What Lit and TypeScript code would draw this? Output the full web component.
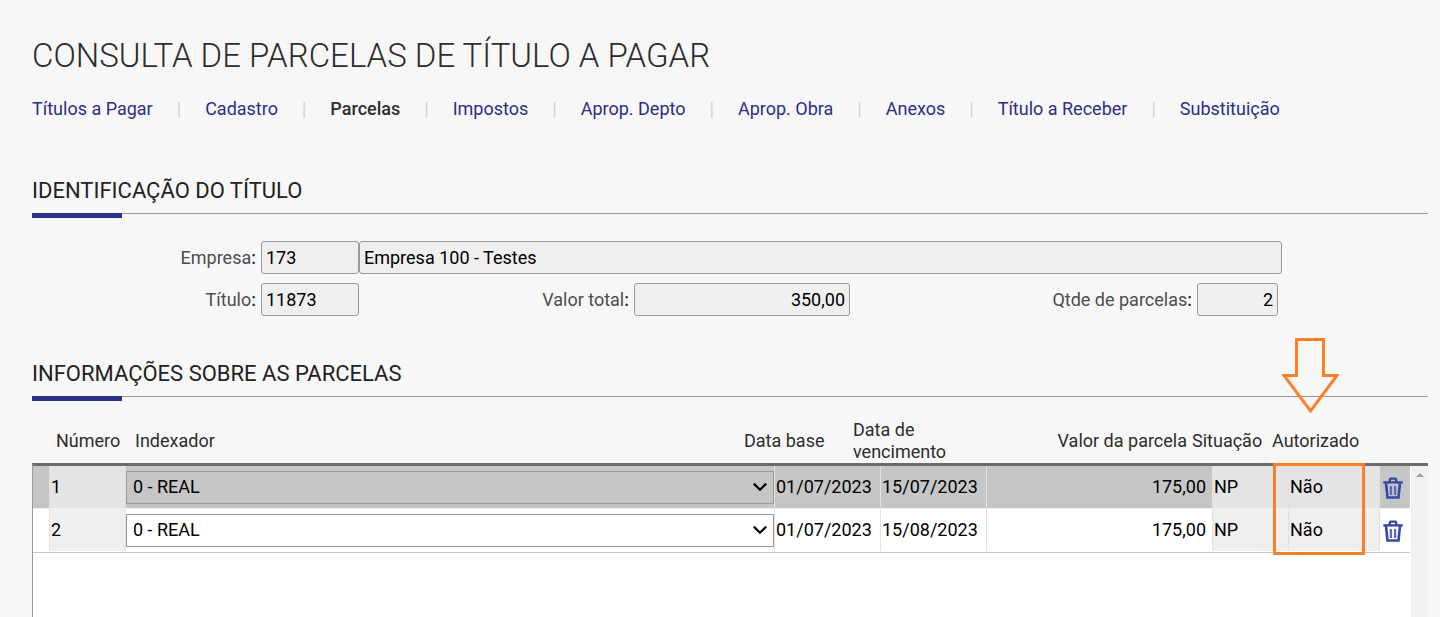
import { LitElement, html, css } from "lit";
import { customElement, property } from "lit/decorators.js";

interface Parcela {
  numero: number;
  indexador: string;
  dataBase: string;
  vencimento: string;
  valor: string;
  situacao: string;
  autorizado: string;
}

const ABAS = [
  "Títulos a Pagar",
  "Cadastro",
  "Parcelas",
  "Impostos",
  "Aprop. Depto",
  "Aprop. Obra",
  "Anexos",
  "Título a Receber",
  "Substituição",
];

const PARCELAS: Parcela[] = [
  { numero: 1, indexador: "0 - REAL", dataBase: "01/07/2023", vencimento: "15/07/2023", valor: "175,00", situacao: "NP", autorizado: "Não" },
  { numero: 2, indexador: "0 - REAL", dataBase: "01/07/2023", vencimento: "15/08/2023", valor: "175,00", situacao: "NP", autorizado: "Não" },
];

@customElement("nav-abas")
class NavAbas extends LitElement {
  @property() ativa = "";

  static styles = css`
    :host { display: block; }
    ul { display: flex; flex-wrap: wrap; margin: 0; padding: 0; list-style: none; }
    li { display: flex; align-items: center; line-height: 24px; }
    li + li::before { content: "|"; margin: 0 24px; color: #d0d0d0; }
    a { color: #2b2f85; text-decoration: none; }
    a.ativa { color: #2d2d2d; font-weight: 500; }
  `;

  render() {
    return html`<nav>
      <ul>
        ${ABAS.map((a) => html`<li><a href="#" class=${a === this.ativa ? "ativa" : ""}>${a}</a></li>`)}
      </ul>
    </nav>`;
  }
}

@customElement("titulo-form")
class TituloForm extends LitElement {
  static styles = css`
    :host { display: block; }
    form { display: grid; gap: 9px; margin-right: 146px; }
    .linha { display: grid; align-items: center; }
    .empresa { grid-template-columns: 229px 98px minmax(0, 1fr); }
    .valores {
      grid-template-columns: 229px 98px minmax(0, 275fr) 216px minmax(0, 347fr) 81px;
      padding-right: 4px;
    }
    label { padding-right: 5px; line-height: 24px; text-align: right; color: #4d4d4d; white-space: nowrap; }
    label span { color: #2d2d2d; font-weight: 500; }
    input {
      box-sizing: border-box;
      width: 100%;
      height: 33px;
      margin: 0;
      padding: 0 4px;
      border: 1px solid #999;
      border-radius: 3px;
      background: #efefef;
      color: #000;
      font: inherit;
      outline: none;
    }
    .num { text-align: right; }
  `;

  render() {
    return html`<form>
      <div class="linha empresa">
        <label for="empresa">Empresa<span>:</span></label>
        <input id="empresa" readonly value="173" />
        <input aria-label="Nome da empresa" readonly value="Empresa 100 - Testes" />
      </div>
      <div class="linha valores">
        <label for="titulo">Título<span>:</span></label>
        <input id="titulo" readonly value="11873" />
        <label for="total">Valor total<span>:</span></label>
        <input id="total" class="num" readonly value="350,00" />
        <label for="qtde">Qtde de parcelas<span>:</span></label>
        <input id="qtde" class="num" readonly value="2" />
      </div>
    </form>`;
  }
}

@customElement("parcelas-grid")
class ParcelasGrid extends LitElement {
  static styles = css`
    :host { display: flex; flex-direction: column; position: relative; }
    table, thead, tbody { display: block; }
    tr { display: grid; }
    th, td { padding: 0; font-weight: 400; text-align: left; }
    .cab tr {
      grid-template-columns: 24px 79px minmax(0, 1fr) 109px 107px 232px 80px 156px;
      align-items: center;
      min-height: 44px;
      line-height: 22px;
      color: #2d2d2d;
    }
    .cab th.num { padding-right: 5px; text-align: right; }
    .corpo {
      display: flex;
      flex: 1;
      border-top: 3px solid #6b6b6b;
      border-left: 1px solid #999;
      background: #fff;
    }
    .corpo table { flex: 1; min-width: 0; }
    .corpo tr {
      grid-template-columns: 16px 76px minmax(0, 1fr) 106px 106px 226px 76px 91px 31px;
      height: 42px;
      border-bottom: 1px solid #efefef;
      background: #fff;
      margin-right: 1px;
    }
    .corpo tr:last-child { padding-bottom: 1px; border-bottom-color: #c6c6c6; }
    .corpo tr.sel { background: #c6c6c6; }
    .corpo td {
      display: flex;
      align-items: center;
      box-sizing: border-box;
      padding: 0 1px;
      border-left: 1px solid #e2e2e2;
      color: #000;
    }
    .corpo td.marca { border-left: 0; }
    .corpo td.idx { display: grid; padding: 0; }
    .corpo td.ro { background: #efefef; }
    .corpo tr.sel td.ro { background: #e4e4e4; }
    .corpo td.valor { justify-content: flex-end; padding-right: 6px; }
    .corpo td.acao { padding: 0 0 0 3px; }
    select {
      grid-area: 1 / 1;
      appearance: none;
      box-sizing: border-box;
      width: 100%;
      height: 33px;
      padding: 0 24px 1px 6px;
      border: 1px solid #999;
      border-radius: 0;
      background-color: #fff;
      color: #000;
      font: inherit;
    }
    .sel select { background-color: #c6c6c6; }
    .idx svg { grid-area: 1 / 1; justify-self: end; margin-right: 6px; pointer-events: none; }
    button { display: block; padding: 2px 0 0; border: 0; background: none; }
    button svg { display: block; }
    .rolagem { display: flex; justify-content: center; width: 17px; background: #f1f1f1; }
    .rolagem::before {
      content: "";
      width: 0;
      height: 0;
      margin-top: 7px;
      border: 4px solid transparent;
      border-top: 0;
      border-bottom-color: #a3a3a3;
    }
    .destaque {
      position: absolute;
      top: 44px;
      right: 63px;
      box-sizing: border-box;
      width: 92px;
      height: 92px;
      border: 3px solid #ff7f27;
      pointer-events: none;
    }
    .seta { position: absolute; top: -81px; right: 89px; pointer-events: none; }
  `;

  private lixeira() {
    return html`<svg width="20" height="22" viewBox="0 0 20 22" fill="none" stroke="#3a48a0" stroke-width="2.4">
      <path d="M6.8 5V2.6Q6.8 1.6 7.8 1.6h4.4q1 0 1 1V5" />
      <path d="M.3 5.4h19.4" />
      <path d="M3 6L4.5 20.5h11L17 6" stroke-width="2.6" />
      <path d="M7.9 9v9M12.1 9v9" stroke="#5f6cb4" />
    </svg>`;
  }

  private divisa() {
    return html`<svg width="16" height="12" viewBox="0 0 16 12" fill="none" stroke="#000" stroke-width="2.2">
      <path d="M1.8 2.6L8 8.8l6.2-6.2" />
    </svg>`;
  }

  render() {
    return html`
      <table class="cab">
        <thead>
          <tr>
            <th></th>
            <th>Número</th>
            <th>Indexador</th>
            <th>Data base</th>
            <th>Data de vencimento</th>
            <th class="num">Valor da parcela</th>
            <th>Situação</th>
            <th>Autorizado</th>
          </tr>
        </thead>
      </table>
      <div class="corpo">
        <table>
          <tbody>
            ${PARCELAS.map(
              (p, i) => html`<tr class=${i === 0 ? "sel" : ""}>
                <td class="marca"></td>
                <td class="ro">${p.numero}</td>
                <td class="idx">
                  <select aria-label="Indexador da parcela ${p.numero}"><option>${p.indexador}</option></select>
                  ${this.divisa()}
                </td>
                <td>${p.dataBase}</td>
                <td>${p.vencimento}</td>
                <td class="valor">${p.valor}</td>
                <td class="ro">${p.situacao}</td>
                <td class="ro">${p.autorizado}</td>
                <td class="acao"><button type="button" aria-label="Excluir parcela ${p.numero}">${this.lixeira()}</button></td>
              </tr>`
            )}
          </tbody>
        </table>
        <div class="rolagem"></div>
      </div>
      <svg class="seta" width="57" height="76" viewBox="0 0 57 76" fill="none" stroke="#ff7f27" stroke-width="3">
        <path d="M14.5 1.5h27v36h13.5L28.5 73 2 37.5h12.5z" />
      </svg>
      <div class="destaque"></div>
    `;
  }
}

@customElement("app-root")
class AppRoot extends LitElement {
  static styles = css`
    :host {
      display: flex;
      flex-direction: column;
      box-sizing: border-box;
      min-height: 100vh;
      padding: 36px 12px 0 32px;
      background: #f7f7f7;
      font: 18px/24px Roboto, "Liberation Sans", sans-serif;
    }
    h1 { margin: 0 0 21px; font-size: 33px; line-height: 40px; font-weight: 300; color: #2d2d2d; }
    h2 {
      position: relative;
      margin: 0;
      padding-bottom: 8px;
      border-bottom: 1px solid #999;
      font-size: 22px;
      line-height: 28px;
      font-weight: 400;
      color: #222;
    }
    h2::after {
      content: "";
      position: absolute;
      left: 0;
      bottom: -5px;
      width: 90px;
      height: 5px;
      background: #2b3388;
    }
    nav-abas { margin-bottom: 56px; }
    titulo-form { margin: 27px 0 44px; }
    parcelas-grid { flex: 1; margin-top: 22px; }
  `;

  render() {
    return html`
      <h1>CONSULTA DE PARCELAS DE TÍTULO A PAGAR</h1>
      <nav-abas ativa="Parcelas"></nav-abas>
      <h2>IDENTIFICAÇÃO DO TÍTULO</h2>
      <titulo-form></titulo-form>
      <h2>INFORMAÇÕES SOBRE AS PARCELAS</h2>
      <parcelas-grid></parcelas-grid>
    `;
  }
}
